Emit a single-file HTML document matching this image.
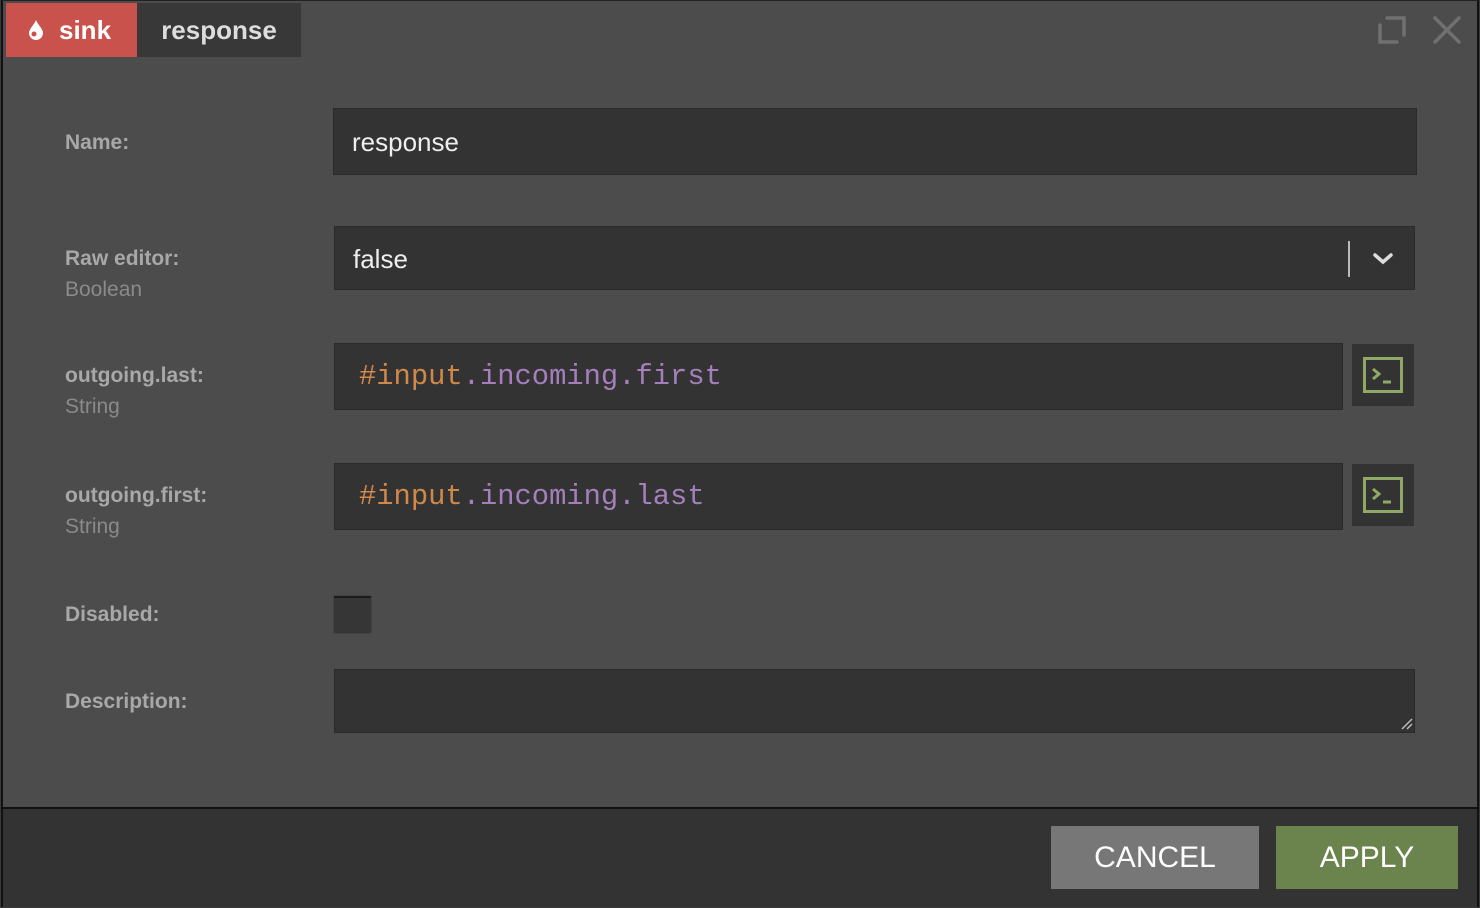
<!DOCTYPE html>
<html><head><style>
*{box-sizing:border-box;margin:0;padding:0}
html,body{width:1480px;height:908px;overflow:hidden;background:#3a3a3a;font-family:"Liberation Sans",sans-serif}
#dlg{position:absolute;left:1px;top:0;width:1478px;height:907px;background:#4c4c4c;border:2px solid #111;border-top:1px solid #222}
.abs{position:absolute}
.tab1{left:3px;top:2px;width:131px;height:54px;background:#c9524d;color:#fff;font-weight:bold;font-size:26px;line-height:54px}
.tab2{left:134px;top:2px;width:164px;height:54px;background:#383838;color:#ddd;font-weight:bold;font-size:26px;line-height:54px;text-align:center}
.lbl{left:62px;color:#a8a8a8;font-weight:bold;font-size:21px}
.sub{left:62px;color:#8a8a8a;font-size:21px}
.inp{background:#333;border:1px solid #2a2a2a;color:#eee;font-size:26px;padding-left:18px}
.mono{font-family:"Liberation Mono",monospace;font-size:28.8px;color:#a47fbc}
.mono b{font-weight:normal;color:#d0884a}
.btn{width:62px;height:62px;background:#333}
.foot{left:0;top:806px;width:1474px;height:100px;background:#333;border-top:2px solid #111}
</style></head><body>
<div id="dlg">
<div class="abs tab1"><svg class="abs" style="left:22px;top:16px" width="16" height="22" viewBox="0 0 16 22"><path d="M8 1 C10 6 15 10 15 14 A7 7 0 0 1 1 14 C1 10 6 6 8 1Z" fill="#fff"/><circle cx="6" cy="15" r="2.5" fill="#c9524d"/></svg><span style="position:absolute;left:53px">sink</span></div>
<div class="abs tab2">response</div>
<svg class="abs" style="left:1372px;top:12px" width="34" height="34" viewBox="0 0 34 34" fill="none" stroke="#707070" stroke-width="3.5" stroke-linecap="round"><path d="M5 12V29H22M12 5H29V22"/></svg>
<svg class="abs" style="left:1429px;top:14px" width="30" height="30" viewBox="0 0 30 30" stroke="#707070" stroke-width="3.5" stroke-linecap="round"><path d="M3 3L27 27M27 3L3 27"/></svg>

<div class="abs lbl" style="top:130px">Name:</div>
<div class="abs inp" style="left:330px;top:107px;width:1084px;height:67px;line-height:66px">response</div>

<div class="abs lbl" style="top:246px">Raw editor:</div>
<div class="abs sub" style="top:277px">Boolean</div>
<div class="abs inp" style="left:331px;top:225px;width:1081px;height:64px;line-height:64px">false</div>
<div class="abs" style="left:1345px;top:240px;width:2px;height:36px;background:#bbb"></div>
<svg class="abs" style="left:1368px;top:250px" width="24" height="16" viewBox="0 0 24 16" fill="none" stroke="#ddd" stroke-width="3.5" stroke-linecap="round"><path d="M4 4L12 11L20 4"/></svg>

<div class="abs lbl" style="top:363px">outgoing.last:</div>
<div class="abs sub" style="top:394px">String</div>
<div class="abs inp mono" style="left:331px;top:342px;width:1009px;height:67px;line-height:66px;padding-left:24px"><b>#input</b>.incoming.first</div>
<div class="abs btn" style="left:1349px;top:343px"><svg class="abs" style="left:11px;top:13px" width="40" height="36" viewBox="0 0 40 36" fill="none" stroke="#8fa865" stroke-width="3"><rect x="1.5" y="1.5" width="37" height="33"/><path d="M10 12L16 17L10 22M20 25H28"/></svg></div>

<div class="abs lbl" style="top:483px">outgoing.first:</div>
<div class="abs sub" style="top:514px">String</div>
<div class="abs inp mono" style="left:331px;top:462px;width:1009px;height:67px;line-height:66px;padding-left:24px"><b>#input</b>.incoming.last</div>
<div class="abs btn" style="left:1349px;top:463px"><svg class="abs" style="left:11px;top:13px" width="40" height="36" viewBox="0 0 40 36" fill="none" stroke="#8fa865" stroke-width="3"><rect x="1.5" y="1.5" width="37" height="33"/><path d="M10 12L16 17L10 22M20 25H28"/></svg></div>

<div class="abs lbl" style="top:602px">Disabled:</div>
<div class="abs" style="left:331px;top:595px;width:37px;height:37px;background:#363636;border-top:2px solid #1c1c1c;box-shadow:0 0 1px #222"></div>

<div class="abs lbl" style="top:689px">Description:</div>
<div class="abs inp" style="left:331px;top:668px;width:1081px;height:64px"></div>
<svg class="abs" style="left:1398px;top:717px" width="12" height="12" viewBox="0 0 12 12" stroke="#bbb" stroke-width="1.5"><path d="M1 11L11 1M6 11L11 6"/></svg>

<div class="abs foot"></div>
<div class="abs" style="left:1048px;top:825px;width:208px;height:63px;background:#777;color:#fff;font-size:30px;line-height:63px;text-align:center">CANCEL</div>
<div class="abs" style="left:1273px;top:825px;width:182px;height:63px;background:#6b844d;color:#fff;font-size:30px;line-height:63px;text-align:center">APPLY</div>
</div>
</body></html>
